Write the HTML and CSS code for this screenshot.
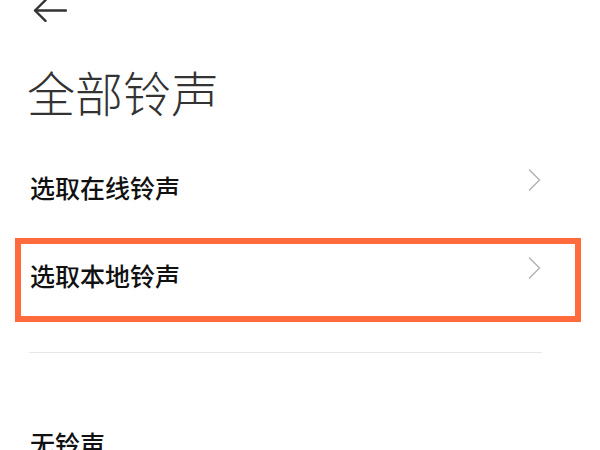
FILE: index.html
```html
<!DOCTYPE html>
<html lang="zh-CN">
<head>
<meta charset="utf-8">
<title>全部铃声</title>
<link rel="stylesheet" href="styles.css">
</head>
<body>
<div class="page">
  <div class="topbar">
    <svg class="back" width="34" height="22" viewBox="0 0 34 22" aria-hidden="true">
      <path d="M33 10.5H2.5" fill="none" stroke="#333" stroke-width="2.4" stroke-linecap="round"/>
      <path d="M12.5 0.2L2 10.5L12.5 20.8" fill="none" stroke="#333" stroke-width="2.4" stroke-linecap="round" stroke-linejoin="round"/>
    </svg>
  </div>
  <h1 class="title">全部铃声</h1>
  <div class="list">
    <div class="row">
      <span class="label">选取在线铃声</span>
      <svg class="chev" width="13" height="22" viewBox="0 0 13 22" aria-hidden="true">
        <path d="M1.5 1L11.5 11L1.5 21" fill="none" stroke="#b3b3b3" stroke-width="1.5" stroke-linecap="round" stroke-linejoin="round"/>
      </svg>
    </div>
    <div class="row row-marked">
      <span class="label">选取本地铃声</span>
      <svg class="chev" width="13" height="22" viewBox="0 0 13 22" aria-hidden="true">
        <path d="M1.5 1L11.5 11L1.5 21" fill="none" stroke="#b3b3b3" stroke-width="1.5" stroke-linecap="round" stroke-linejoin="round"/>
      </svg>
      <span class="mark"></span>
    </div>
  </div>
  <div class="divider"></div>
  <div class="row row-plain">
    <span class="label">无铃声</span>
  </div>
</div>
</body>
</html>
```
FILE: styles.css
```css
html, body {
  margin: 0;
  padding: 0;
  background: #ffffff;
}
body {
  font-family: "Noto Sans CJK SC", "Noto Sans", sans-serif;
  color: #111111;
  overflow: hidden;
}
.page {
  width: 600px;
  height: 450px;
  overflow: hidden;
}
.topbar {
  height: 22px;
  padding-left: 33px;
}
.back {
  display: block;
}
.title {
  margin: 45px 0 0 0;
  padding-left: 27px;
  font-size: 48px;
  line-height: 48px;
  font-weight: 300;
  color: #333333;
  letter-spacing: 0;
}
.list {
  margin-top: 28px;
}
.row {
  position: relative;
  height: 88px;
  display: flex;
  align-items: center;
  justify-content: space-between;
  padding: 0 59px 0 30px;
}
.label {
  font-size: 25px;
  line-height: 25px;
  font-weight: 500;
  color: #111111;
}
.chev {
  display: block;
  margin-bottom: 14px;
}
.mark {
  position: absolute;
  left: 15px;
  right: 19px;
  top: 7px;
  bottom: -3px;
  border: 6.5px solid #ff6b3d;
  box-sizing: border-box;
  pointer-events: none;
}
.divider {
  height: 1px;
  background: #e6e6e6;
  margin: 33px 58px 0 29px;
}
.row-plain {
  margin-top: 46px;
}
```
